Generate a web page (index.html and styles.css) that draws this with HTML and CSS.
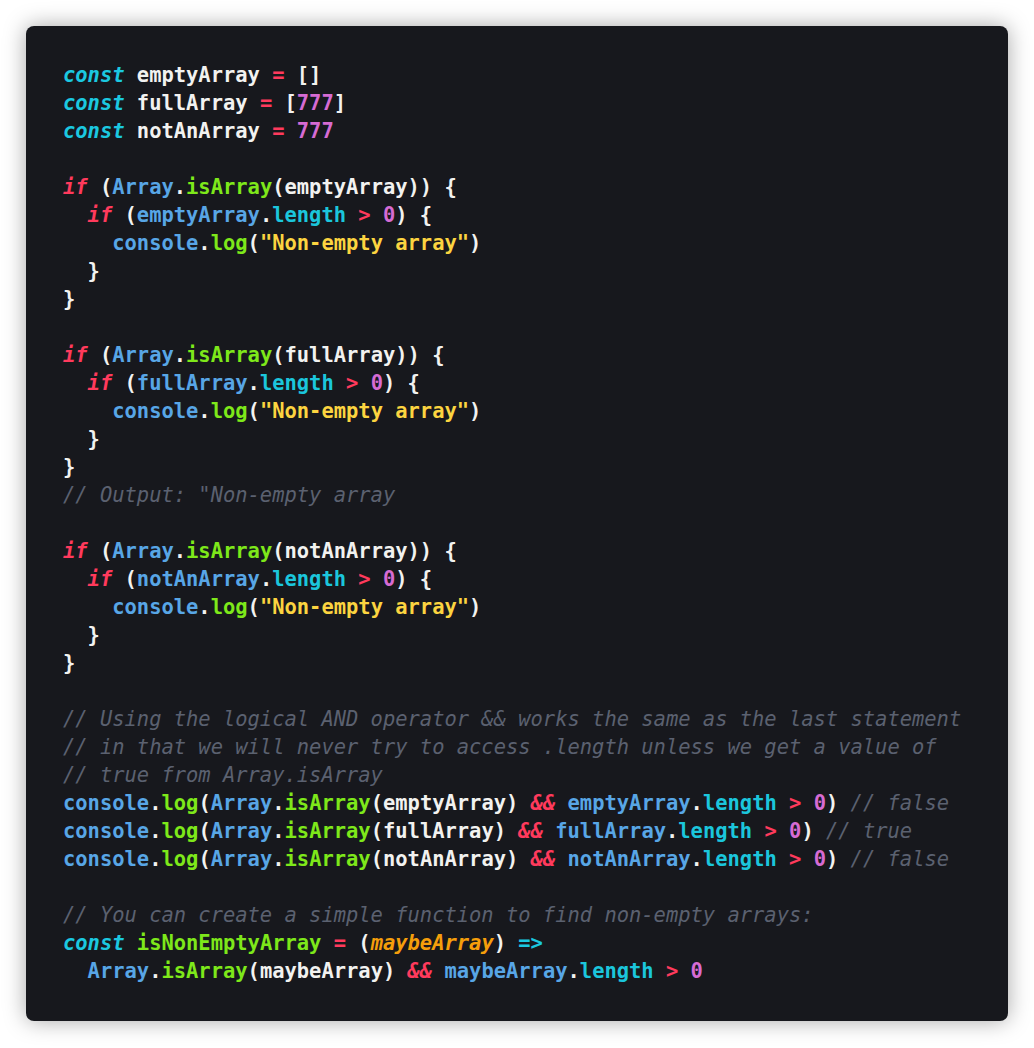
FILE: index.html
```html
<!DOCTYPE html>
<html>
<head>
<meta charset="utf-8">
<link rel="stylesheet" href="styles.css">
</head>
<body>
<div class="card">
<pre class="code"><span class="kw">const</span> emptyArray <span class="op">=</span> []
<span class="kw">const</span> fullArray <span class="op">=</span> [<span class="num">777</span>]
<span class="kw">const</span> notAnArray <span class="op">=</span> <span class="num">777</span>

<span class="ctl">if</span> (<span class="obj">Array</span>.<span class="fn">isArray</span>(emptyArray)) {
  <span class="ctl">if</span> (<span class="obj">emptyArray</span>.<span class="prop">length</span> <span class="op">&gt;</span> <span class="num">0</span>) {
    <span class="obj">console</span>.<span class="fn">log</span>(<span class="str">"Non-empty array"</span>)
  }
}

<span class="ctl">if</span> (<span class="obj">Array</span>.<span class="fn">isArray</span>(fullArray)) {
  <span class="ctl">if</span> (<span class="obj">fullArray</span>.<span class="prop">length</span> <span class="op">&gt;</span> <span class="num">0</span>) {
    <span class="obj">console</span>.<span class="fn">log</span>(<span class="str">"Non-empty array"</span>)
  }
}
<span class="cm">// Output: "Non-empty array</span>

<span class="ctl">if</span> (<span class="obj">Array</span>.<span class="fn">isArray</span>(notAnArray)) {
  <span class="ctl">if</span> (<span class="obj">notAnArray</span>.<span class="prop">length</span> <span class="op">&gt;</span> <span class="num">0</span>) {
    <span class="obj">console</span>.<span class="fn">log</span>(<span class="str">"Non-empty array"</span>)
  }
}

<span class="cm">// Using the logical AND operator &amp;&amp; works the same as the last statement</span>
<span class="cm">// in that we will never try to access .length unless we get a value of</span>
<span class="cm">// true from Array.isArray</span>
<span class="obj">console</span>.<span class="fn">log</span>(<span class="obj">Array</span>.<span class="fn">isArray</span>(emptyArray) <span class="op it">&amp;&amp;</span> <span class="obj">emptyArray</span>.<span class="prop">length</span> <span class="op">&gt;</span> <span class="num">0</span>) <span class="cm">// false</span>
<span class="obj">console</span>.<span class="fn">log</span>(<span class="obj">Array</span>.<span class="fn">isArray</span>(fullArray) <span class="op it">&amp;&amp;</span> <span class="obj">fullArray</span>.<span class="prop">length</span> <span class="op">&gt;</span> <span class="num">0</span>) <span class="cm">// true</span>
<span class="obj">console</span>.<span class="fn">log</span>(<span class="obj">Array</span>.<span class="fn">isArray</span>(notAnArray) <span class="op it">&amp;&amp;</span> <span class="obj">notAnArray</span>.<span class="prop">length</span> <span class="op">&gt;</span> <span class="num">0</span>) <span class="cm">// false</span>

<span class="cm">// You can create a simple function to find non-empty arrays:</span>
<span class="kw">const</span> <span class="fn">isNonEmptyArray</span> <span class="op">=</span> (<span class="param">maybeArray</span>) <span class="arrow">=&gt;</span>
  <span class="obj">Array</span>.<span class="fn">isArray</span>(maybeArray) <span class="op it">&amp;&amp;</span> <span class="obj">maybeArray</span>.<span class="prop">length</span> <span class="op">&gt;</span> <span class="num">0</span></pre>
</div>
</body>
</html>
```

FILE: styles.css
```css
html, body {
  margin: 0;
  padding: 0;
  background: #ffffff;
}

body {
  padding: 26px;
}

.card {
  width: 982px;
  height: 995px;
  box-sizing: border-box;
  background: #17181d;
  border-radius: 8px;
  box-shadow: 0 0 22px rgba(0, 0, 0, 0.35);
  padding: 35px 36px 36px 37px;
}

.code {
  margin: 0;
  font-family: "DejaVu Sans Mono", "Liberation Mono", monospace;
  font-size: 20.45px;
  line-height: 28px;
  font-weight: bold;
  color: #f2f2f0;
  white-space: pre;
}

.kw {
  color: #1bc8e0;
  font-style: italic;
}

.ctl {
  color: #ff3a5c;
  font-style: italic;
}

.op {
  color: #ff3a5c;
}

.op.it {
  font-style: italic;
}

.num {
  color: #d66bd3;
}

.obj {
  color: #58a6e6;
}

.fn {
  color: #7ee81a;
}

.prop {
  color: #1bc6dc;
}

.str {
  color: #fcd440;
}

.param {
  color: #f59e0b;
  font-style: italic;
}

.arrow {
  color: #1bc8e0;
}

.cm {
  color: #5b6170;
  font-style: italic;
  font-weight: normal;
}
```
